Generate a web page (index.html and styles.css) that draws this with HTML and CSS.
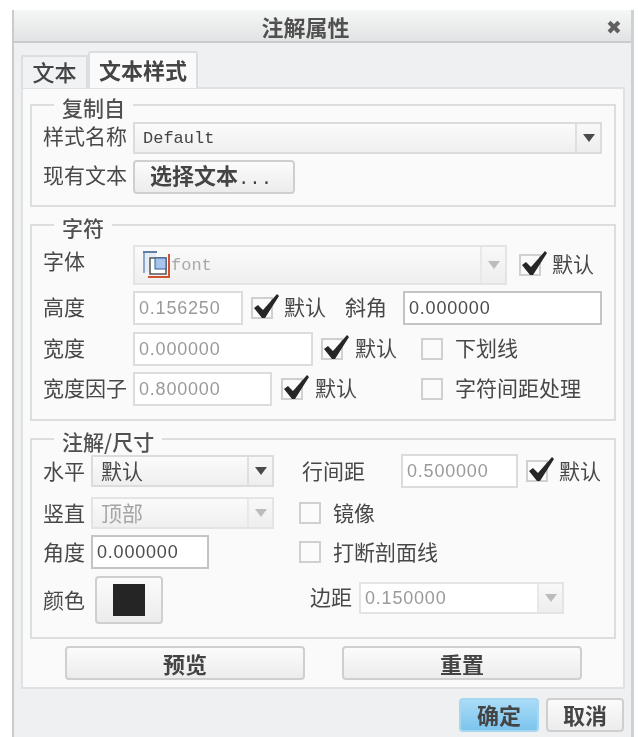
FILE: index.html
```html
<!DOCTYPE html>
<html lang="zh">
<head>
<meta charset="utf-8">
<title>注解属性</title>
<link rel="stylesheet" href="styles.css">
</head>
<body>
<svg class="defs" width="0" height="0" aria-hidden="true">
  <symbol id="tick" viewBox="0 0 30 26"><path d="M3 15 L7 12 L12 17 L26 1 L28 3 L14 25 L11 25 Z" fill="#262626"/></symbol>
  <symbol id="arrow" viewBox="0 0 12 8"><path d="M0 0H12L6 8Z"/></symbol>
</svg>
<main class="window">
  <header class="titlebar"><h1 class="title">注解属性</h1><span class="close">✖</span></header>
  <div class="body">
    <nav class="tabs"><span class="tab">文本</span><span class="tab active">文本样式</span></nav>
    <section class="panel">
      <fieldset class="group g1">
        <legend>复制自</legend>
        <div class="row r32"><label class="lab l84">样式名称</label>
          <div class="select w469 mono"><span class="val">Default</span><span class="drop"><svg class="arr"><use href="#arrow"/></svg></span></div></div>
        <div class="row r34 mt6"><label class="lab l84">现有文本</label>
          <button class="btn pick"><b>选择文本</b><span class="dots">...</span></button></div>
      </fieldset>
      <fieldset class="group g2">
        <legend>字符</legend>
        <div class="row r40"><label class="lab l84 raised">字体</label>
          <div class="select w374 off"><svg class="fonticon" viewBox="0 0 28 28"><rect x="1" y="1" width="12" height="20" fill="#e6ecf4"/><path d="M1 0V22" stroke="#8ea6c8" stroke-width="2" fill="none"/><path d="M0 1H14" stroke="#5f7fa8" stroke-width="2" fill="none"/><path d="M26 3V26H5" stroke="#d0522f" stroke-width="2" fill="none"/><rect x="7" y="7" width="16" height="16" fill="#fff" stroke="#555" stroke-width="1.5"/><rect x="12" y="7" width="11" height="11" fill="#a9c4ea" stroke="#2f5f9f"/></svg><span class="fontname">font</span><span class="drop"><svg class="arr"><use href="#arrow"/></svg></span></div>
          <span class="check on ml12"><svg><use href="#tick"/></svg></span><span class="txt ml11">默认</span></div>
        <div class="row r34 mt6"><label class="lab l84">高度</label>
          <span class="input w110 dim">0.156250</span>
          <span class="check on ml8"><svg><use href="#tick"/></svg></span><span class="txt ml11">默认</span>
          <span class="txt ml19">斜角</span><span class="input w199 ml16 live">0.000000</span></div>
        <div class="row r34 mt7"><label class="lab l84">宽度</label>
          <span class="input w180 dim">0.000000</span>
          <span class="check on ml8"><svg><use href="#tick"/></svg></span><span class="txt ml12">默认</span>
          <span class="check ml24"></span><span class="txt ml12">下划线</span></div>
        <div class="row r34 mt6"><label class="lab l84">宽度因子</label>
          <span class="input w139 dim">0.800000</span>
          <span class="check on ml9"><svg><use href="#tick"/></svg></span><span class="txt ml12">默认</span>
          <span class="check ml64"></span><span class="txt ml12">字符间距处理</span></div>
      </fieldset>
      <fieldset class="group g3">
        <legend>注解/尺寸</legend>
        <div class="row r32"><label class="lab l42">水平</label>
          <div class="select w183 cjkval"><span class="val">默认</span><span class="drop"><svg class="arr"><use href="#arrow"/></svg></span></div>
          <span class="txt ml28">行间距</span><span class="input w117 ml36 dim">0.500000</span>
          <span class="check on ml8"><svg><use href="#tick"/></svg></span><span class="txt ml11">默认</span></div>
        <div class="row r32 mt10"><label class="lab l42">竖直</label>
          <div class="select w183 cjkval off"><span class="val">顶部</span><span class="drop"><svg class="arr"><use href="#arrow"/></svg></span></div>
          <span class="check ml25"></span><span class="txt ml12">镜像</span></div>
        <div class="row r34 mt6"><label class="lab l42">角度</label>
          <span class="input w118 live">0.000000</span>
          <span class="check ml90"></span><span class="txt ml12">打断剖面线</span></div>
        <div class="row r48 mt7"><label class="lab l42">颜色</label>
          <button class="btn swatchbtn"><span class="swatch"></span></button>
          <span class="txt ml147 lifted">边距</span>
          <div class="select w205 ml7 combo"><span class="val">0.150000</span><span class="drop"><svg class="arr"><use href="#arrow"/></svg></span></div></div>
      </fieldset>
      <div class="actions"><button class="btn wide"><b>预览</b></button><button class="btn wide"><b>重置</b></button></div>
    </section>
    <footer class="footer"><button class="btn ok"><b>确定</b></button><button class="btn cancel"><b>取消</b></button></footer>
  </div>
</main>
</body>
</html>
```
FILE: styles.css
```css
* { box-sizing: border-box; }
html, body { margin: 0; padding: 0; background: #fff; }
body { height: 737px; overflow: hidden; font-family: "Noto Sans CJK SC", "Liberation Sans", sans-serif; font-size: 21px; color: #484848; }
.defs { position: absolute; }
.window { margin: 10px 0 0 12px; width: 622px; height: 727px; border-left: 2px solid #c9cbcd; border-right: 3px solid #cfd2d5; background: #eff0f2; filter: blur(0.5px); }
.titlebar { height: 33px; position: relative; display: flex; align-items: center; justify-content: center; padding-right: 34px; background: linear-gradient(#f5f6f6, #e2e3e4); border-bottom: 2px solid #c9cbcd; }
.title { margin: 0; font-size: 22px; font-weight: 700; line-height: 28px; color: #505050; }
.close { position: absolute; right: 9px; top: 4px; font-size: 19px; line-height: 26px; font-family: "DejaVu Sans", sans-serif; color: #606060; }
.body { padding: 8px 6px 0 7px; }
.tabs { display: flex; align-items: flex-end; height: 37px; margin-bottom: -1px; position: relative; }
.tab { height: 33px; width: 67px; line-height: 28px; font-size: 22px; text-align: center; background: #f1f2f3; border: 2px solid #dcdddf; border-bottom: 0; color: #444; font-weight: 500; }
.tab.active { height: 37px; width: 110px; background: #fafafa; border-radius: 3px 3px 0 0; font-weight: 700; line-height: 32px; position: relative; z-index: 1; }
.panel { height: 602px; background: #fafafa; border: 2px solid #e0e1e2; padding: 5px 7px 0 7px; }
.group { margin: 0; padding: 0 0 0 11px; border: 2px solid #dcdddd; min-width: 0; }
.group legend { margin-left: 11px; padding: 0 8px; height: 22px; line-height: 26px; font-weight: 500; color: #505050; }
.g1 { height: 113px; padding-top: 6px; }
.g2 { height: 207px; margin-top: 7px; padding-top: 9px; }
.g3 { height: 211px; margin-top: 7px; padding-top: 5px; }
.row { display: flex; align-items: center; }
.r32 { height: 32px; } .r34 { height: 34px; } .r40 { height: 40px; } .r48 { height: 48px; }
.mt6 { margin-top: 6px; } .mt7 { margin-top: 7px; } .mt10 { margin-top: 10px; }
.lab { flex: none; white-space: nowrap; line-height: 26px; }
.g1 .lab { padding-bottom: 6px; }
.g2 .lab, .g2 .txt { padding-bottom: 4px; }
.g3 .lab, .g3 .txt { padding-bottom: 2px; }
.g3 .lifted { padding-bottom: 8px; }
.g2 .raised { padding-bottom: 10px; }
.l84 { width: 90px; } .l42 { width: 48px; }
.ml7 { margin-left: 7px; } .ml8 { margin-left: 8px; } .ml9 { margin-left: 9px; } .ml11 { margin-left: 11px; } .ml12 { margin-left: 12px; }
.ml16 { margin-left: 16px; } .ml19 { margin-left: 19px; } .ml24 { margin-left: 24px; } .ml25 { margin-left: 25px; } .ml28 { margin-left: 28px; } .ml36 { margin-left: 36px; }
.ml64 { margin-left: 64px; } .ml90 { margin-left: 90px; } .ml147 { margin-left: 147px; }
.txt { white-space: nowrap; line-height: 26px; flex: none; }
.w110 { width: 110px; } .w117 { width: 117px; } .w118 { width: 118px; } .w139 { width: 139px; } .w180 { width: 180px; } .w183 { width: 183px; } .w199 { width: 199px; } .w205 { width: 205px; } .w374 { width: 374px; } .w469 { width: 469px; }
.input { flex: none; height: 34px; line-height: 30px; padding-left: 4px; border: 2px solid #dcdcdc; background: #fff; font-family: "Liberation Sans", sans-serif; font-size: 18px; letter-spacing: 0.8px; }
.input.dim { color: #9a9a9a; }
.input.live { color: #4c4c4c; border-color: #c4c4c4; }
.select { flex: none; position: relative; height: 100%; display: flex; align-items: center; border: 2px solid #dcdcdc; background: linear-gradient(#fbfbfb, #efefef); }
.select .val { padding-left: 8px; }
.mono .val { font-family: "Liberation Mono", monospace; font-size: 17px; color: #444; }
.cjkval .val { padding-bottom: 2px; }
.select.off { color: #a5a5a5; border-color: #e4e4e4; }
.combo { height: 32px; margin-bottom: 4px; background: #fff; border-color: #e4e4e4; }
.combo .val { padding-left: 4px; font-family: "Liberation Sans", sans-serif; font-size: 18px; letter-spacing: 0.8px; color: #9a9a9a; }
.drop { position: absolute; right: 0; top: 0; bottom: 0; width: 25px; border-left: 2px solid #dfdfdf; background: linear-gradient(#f8f8f8, #eeeeef); display: flex; align-items: center; justify-content: center; }
.arr { width: 12px; height: 8px; fill: #4a4a4a; }
.off .arr, .combo .arr { fill: #bcbcbc; }
.off .drop, .combo .drop { border-left-color: #e8e8e8; }
.fonticon { width: 28px; height: 28px; margin-left: 8px; flex: none; }
.fontname { font-family: "Liberation Mono", monospace; font-size: 17px; color: #a8a8a8; }
.check { flex: none; position: relative; width: 22px; height: 22px; border: 2px solid #d0d0d0; background: #fbfbfb; }
.check svg { position: absolute; left: -2px; top: -6px; width: 30px; height: 26px; }
.btn { font: inherit; font-size: 22px; color: #444; margin: 0; padding: 0; border: 2px solid #cfcfcf; border-radius: 4px; background: linear-gradient(#fbfbfb, #ececec); }
.pick { width: 162px; height: 34px; line-height: 24px; padding: 0 6px 4px 0; }
.pick .dots { font-family: "Liberation Mono", monospace; font-weight: 400; font-size: 19px; }
.swatchbtn { width: 68px; height: 48px; margin-left: 4px; display: flex; align-items: center; justify-content: center; }
.swatch { width: 32px; height: 32px; background: #252525; }
.actions { display: flex; padding: 7px 0 0 35px; gap: 37px; }
.wide { width: 240px; height: 34px; line-height: 28px; }
.footer { display: flex; justify-content: flex-end; gap: 7px; padding: 9px 1px 0 0; }
.ok, .cancel { height: 34px; line-height: 26px; padding-bottom: 3px; }
.ok { width: 80px; background: linear-gradient(#a9dcf7, #7cc4ee); border-color: #a6d6f0; }
.cancel { width: 78px; }
```
